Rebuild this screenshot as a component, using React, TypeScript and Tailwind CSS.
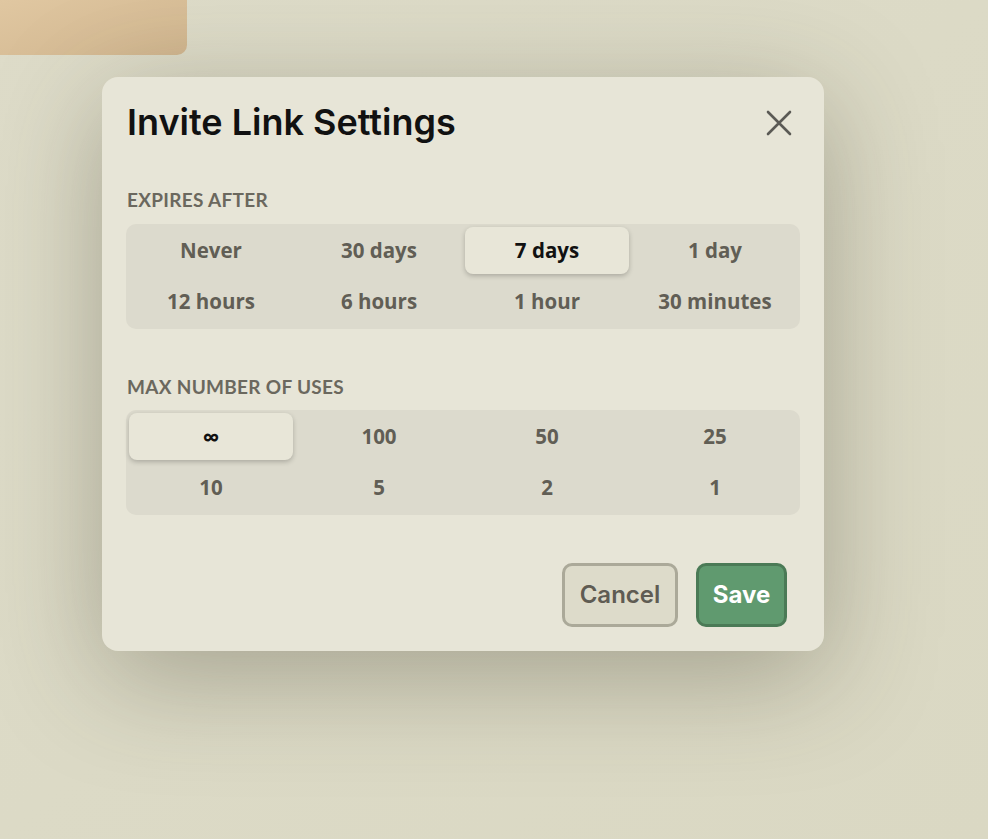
const expiryOptions = ["Never", "30 days", "7 days", "1 day", "12 hours", "6 hours", "1 hour", "30 minutes"];
const useOptions = ["∞", "100", "50", "25", "10", "5", "2", "1"];

function OptionGrid({ options, selected }: { options: string[]; selected: string }) {
  return (
    <div className="grid grid-cols-4 gap-x-[4px] gap-y-[4px] rounded-[10px] bg-[#dcdacd] p-[3px] pb-[4px] font-['Open_Sans',sans-serif]">
      {options.map((o) => (
        <button
          key={o}
          className={
            o === selected
              ? "flex h-[47px] items-center justify-center rounded-[8px] bg-[#e8e6d8] text-[20.5px] font-bold text-[#111111] shadow-[0_2px_5px_rgba(0,0,0,0.22)]"
              : "flex h-[47px] items-center justify-center rounded-[8px] text-[20.5px] font-bold text-[#615e55]"
          }
        >
          {o === "∞" ? <span className="text-[24px] leading-none">∞</span> : o}
        </button>
      ))}
    </div>
  );
}

export default function App() {
  return (
    <div className="relative h-[839px] w-full overflow-hidden bg-gradient-to-br from-[#dedcc9] to-[#dad8c3] font-['Lato',sans-serif]">
      <div className="h-[55px] w-[187px] rounded-br-[10px] bg-gradient-to-br from-[#e0c7a1] to-[#d2b790]" />

      <div className="absolute left-[102px] top-[77px] w-[722px] rounded-[16px] bg-[#e7e5d7] px-[24px] pb-[24px] pt-[18px] shadow-[0_25px_110px_rgba(60,58,40,0.35)]">
        <div className="flex items-center justify-between">
          <h1 className="pl-[1px] font-['Inter',sans-serif] text-[36px] font-semibold text-[#111111]">
            Invite Link Settings
          </h1>
          <button className="mr-[1px] mt-[1px] flex h-[40px] w-[40px] items-center justify-center">
            <svg width="26" height="26" viewBox="0 0 26 26" fill="none" stroke="#5b5a55" strokeWidth="2.6" strokeLinecap="round">
              <path d="M2 2 L24 24 M24 2 L2 24" />
            </svg>
          </button>
        </div>

        <div className="mt-[37px]">
          <div className="mb-[9px] pl-[1px] text-[19px] font-bold tracking-[0.3px] text-[#6b685e]">EXPIRES AFTER</div>
          <OptionGrid options={expiryOptions} selected="7 days" />
        </div>

        <div className="mt-[44px]">
          <div className="mb-[9px] pl-[1px] text-[19px] font-bold tracking-[0.3px] text-[#6b685e]">MAX NUMBER OF USES</div>
          <OptionGrid options={useOptions} selected="∞" />
        </div>

        <div className="mt-[48px] flex justify-end gap-[18px] pr-[13px]">
          <button className="h-[64px] w-[116px] rounded-[10px] border-[3px] border-[#aba999] bg-[#dddbca] font-['Inter',sans-serif] text-[24px] font-semibold text-[#5f5c53]">
            Cancel
          </button>
          <button className="h-[64px] w-[91px] rounded-[10px] border-[3px] border-[#4b7a56] bg-[#609a6f] font-['Inter',sans-serif] text-[24px] font-bold text-white">
            Save
          </button>
        </div>
      </div>
    </div>
  );
}
